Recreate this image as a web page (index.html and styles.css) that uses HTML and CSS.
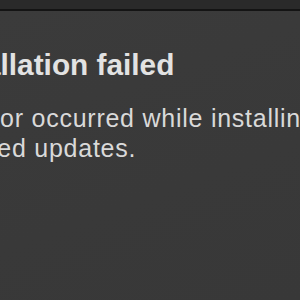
FILE: index.html
```html
<!DOCTYPE html>
<html>
<head>
<meta charset="utf-8">
<link rel="stylesheet" href="styles.css">
</head>
<body>
<div class="window">
  <div class="titlebar"></div>
  <div class="sheet">
    <div class="content">
      <h1 class="title">Installation failed</h1>
      <p class="message">An error occurred while installing the<br>selected updates.</p>
    </div>
  </div>
</div>
</body>
</html>
```

FILE: styles.css
```css
html, body {
  margin: 0;
  padding: 0;
  width: 300px;
  height: 300px;
  overflow: hidden;
  background: #3a3a3a;
}
.window {
  display: flex;
  flex-direction: column;
  width: 300px;
  height: 300px;
}
.titlebar {
  height: 9px;
  background: #2a2a2a;
  border-bottom: 2px solid #141414;
  flex: none;
}
.sheet {
  flex: 1;
  background: linear-gradient(160deg, #3b3b3b 0%, #393939 60%, #383838 100%);
  overflow: hidden;
}
.content {
  margin-left: -72.5px;
  white-space: nowrap;
  font-family: "Liberation Sans", Arial, sans-serif;
}
.title {
  margin: 36px 0 0 3.5px;
  font-size: 29.8px;
  line-height: 36px;
  font-weight: bold;
  color: #e2e2e2;
}
.message {
  margin: 20px 0 0 0;
  font-size: 25px;
  line-height: 30px;
  letter-spacing: 0.75px;
  color: #d9d9d9;
}
```
